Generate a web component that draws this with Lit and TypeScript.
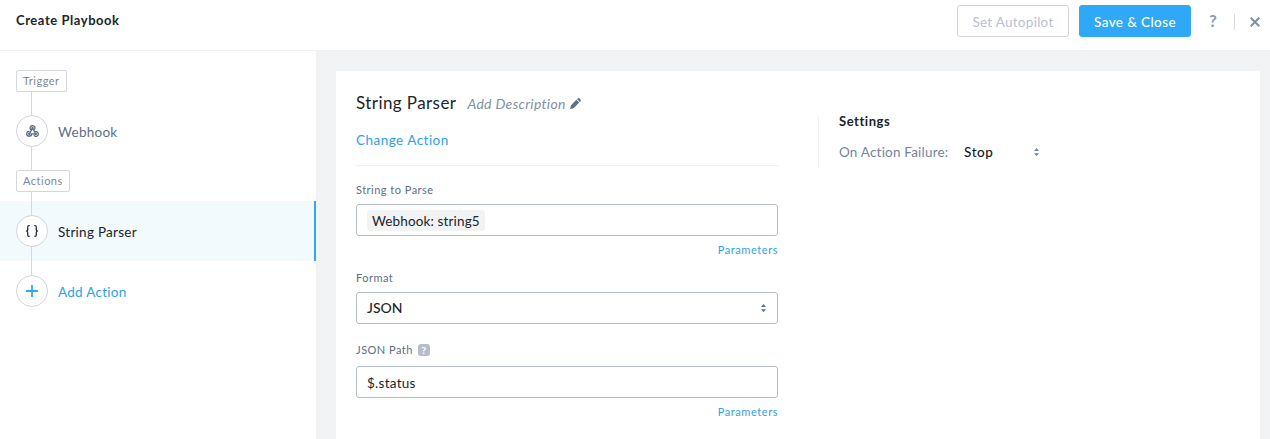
import { LitElement, html, css, svg } from "lit";
import { customElement } from "lit/decorators.js";

const sorter = svg`<path d="M0 3 L2.5 0 L5 3Z M0 5.2 H5 L2.5 8.2Z" fill="currentColor"/>`;

@customElement("app-root")
export class AppRoot extends LitElement {
  static styles = css`
    :host {
      display: flex;
      flex-direction: column;
      height: 439px;
      overflow: hidden;
      background: #fff;
      color: #20242b;
      font: 13.5px/20px Lato, "Open Sans", sans-serif;
      letter-spacing: 0.27px;
      white-space: nowrap;
    }
    * { box-sizing: border-box; }
    svg { display: block; flex: none; }
    header {
      display: flex;
      align-items: flex-start;
      flex: none;
      height: 51px;
      padding: 5px 10px 0 16px;
      border-bottom: 1px solid #f1f2f5;
    }
    .title { font-size: 13px; font-weight: 700; letter-spacing: 0.55px; line-height: 31px; margin-right: auto; }
    .btn {
      height: 32px;
      width: 112px;
      border-radius: 3px;
      border: 1px solid #cfd4df;
      color: #b9c0cf;
      text-align: center;
      line-height: 32px;
    }
    .primary { margin-left: 10px; border-color: #2ea8f7; background: #2ea8f7; color: #fff; font-weight: 500; letter-spacing: 0.4px; }
    .help { margin-left: 18px; width: 10px; line-height: 32px; font-size: 17px; font-weight: 700; color: #8d9bad; }
    .rule { margin: 9px 0 0 15px; width: 1px; height: 16px; background: #d5d9e1; }
    .close { margin: 12px 0 0 15px; color: #8290a3; }
    .body { display: flex; flex: 1; min-height: 0; }
    aside { width: 316px; background: #fff; padding-top: 19px; }
    .tag {
      display: inline-block;
      vertical-align: top;
      height: 22px;
      margin-left: 16px;
      padding: 0 6px;
      border: 1px solid #d2d7e0;
      border-radius: 2px;
      background: #fff;
      color: #7b899c;
      font-size: 11px;
      line-height: 20px;
      letter-spacing: 0.5px;
    }
    .stem { width: 1px; height: 9px; margin-left: 31px; background: #d2d7e0; }
    .step {
      display: flex;
      align-items: center;
      height: 60px;
      padding-left: 16px;
      color: #5d6e84;
      background: linear-gradient(#d2d7e0, #d2d7e0) 31px 0 / 1px 100% no-repeat;
    }
    .step.active {
      color: #20242b;
      border-right: 2px solid #2ea8f7;
      background-color: #f2fafe;
    }
    .step.add { color: #2ea1ee; background-size: 1px 30px; }
    .dot {
      display: flex;
      align-items: center;
      justify-content: center;
      width: 32px;
      height: 32px;
      margin-right: 10px;
      border: 1px solid #d2d5dd;
      border-radius: 50%;
      background: #fff;
    }
    .label { padding-top: 2px; }
    main { flex: 1; padding: 20px 10px 0 20px; background: #f2f3f5; }
    .card { display: flex; height: 100%; padding-left: 20px; background: #fff; }
    .form { width: 422px; padding-top: 22px; }
    .head { display: flex; align-items: baseline; height: 36px; }
    .name { font-size: 17px; letter-spacing: 0.42px; }
    .desc { margin-left: 11px; font-size: 14px; font-style: italic; color: #8190a3; letter-spacing: 0.32px; }
    .pencil { margin-left: 4px; color: #5f6f84; }
    .link { color: #2ea1ee; }
    .change { height: 37px; border-bottom: 1px solid #eff1f4; line-height: 22px; letter-spacing: 0.48px; }
    .field-label {
      display: flex;
      align-items: center;
      height: 18px;
      margin: 10px 0 5px;
      color: #5d6e84;
      font-size: 11px;
      letter-spacing: 0.48px;
    }
    .field-label.first { margin-top: 15px; }
    .field-label.last { margin: 17px 0 7px; }
    .box {
      display: flex;
      align-items: center;
      height: 32px;
      padding: 2px 10px 0;
      border: 1px solid #b5bccb;
      border-radius: 3px;
    }
    .box.select { padding-top: 0; font-weight: 500; font-size: 14px; letter-spacing: 0; }
    .chip { height: 21px; padding: 0 5px; border-radius: 4px; background: #f2f3f5; line-height: 22px; margin-top: -1px; letter-spacing: 0.13px; }
    .params { height: 18px; margin-top: 5px; text-align: right; font-size: 11px; line-height: 18px; letter-spacing: 0.56px; }
    .arrows { margin: 0 1px 0 auto; color: #5f6f84; }
    .side { color: #75849a; }
    .hint { display: flex; justify-content: center; width: 12px; height: 12px; margin-left: 5px; border-radius: 3px; background: #b5bccb; color: #fff; font-size: 10px; line-height: 12px; font-weight: 900; letter-spacing: 0; }
    .settings { height: 52px; margin: 45px 0 0 40px; padding-left: 20px; border-left: 1px solid #eff1f4; }
    .settings h2 { margin: -5px 0 11px; font-size: 13px; font-weight: 700; line-height: 20px; letter-spacing: 0.55px; }
    .row { display: flex; align-items: center; height: 20px; }
    .row .k { width: 125px; color: #75849a; letter-spacing: 0.2px; }
    .row .v { width: 70px; color: #16191f; font-weight: 500; letter-spacing: 0.6px; }
  `;

  step(icon: unknown, label: string, kind = "") {
    return html`<div class="step ${kind}"><span class="dot">${icon}</span><span class="label">${label}</span></div>`;
  }

  arrows(cls: string) {
    return html`<svg class=${cls} width="5" height="8.2" viewBox="0 0 5 8.2">${sorter}</svg>`;
  }

  render() {
    const webhook = html`<svg width="13" height="12" viewBox="0 0 14 13" fill="none" stroke="#5a6a80" stroke-width="1.35" stroke-linecap="round">
      <path d="M5 5A2.6 2.6 0 1 1 9.3 4.5M7 3.4 4.2 8.7M7 3.4 9.6 8M3.2 6.9A2.6 2.6 0 1 0 6 9.6H10.8M9.3 7.7A2.5 2.5 0 1 1 8.7 11.3"/>
      <circle cx="7" cy="3.2" r=".6"/><circle cx="3.5" cy="9.5" r=".6"/><circle cx="10.6" cy="9.6" r=".6"/></svg>`;
    const braces = html`<svg width="14" height="12" viewBox="0 0 14 12" fill="none" stroke="#292f38" stroke-width="1.3">
      <path d="M4.7.7H4Q2.7.7 2.7 2V4.4Q2.7 6 1.2 6Q2.7 6 2.7 7.6V10Q2.7 11.3 4 11.3H4.7M9.3.7H10Q11.3.7 11.3 2V4.4Q11.3 6 12.8 6Q11.3 6 11.3 7.6V10Q11.3 11.3 10 11.3H9.3"/></svg>`;
    const plus = html`<svg width="12" height="12" viewBox="0 0 12 12" stroke="#2ea8f7" stroke-width="1.8"><path d="M6 0V12M0 6H12"/></svg>`;
    return html`
      <header>
        <span class="title">Create Playbook</span>
        <span class="btn">Set Autopilot</span>
        <span class="btn primary">Save &amp; Close</span>
        <span class="help">?</span>
        <span class="rule"></span>
        <svg class="close" width="10" height="10" viewBox="0 0 10 10" stroke="currentColor" stroke-width="2"><path d="M.7.7 9.3 9.3M9.3.7.7 9.3"/></svg>
      </header>
      <div class="body">
        <aside>
          <div class="tag">Trigger</div>
          <div class="stem"></div>
          ${this.step(webhook, "Webhook")}
          <div class="stem"></div>
          <div class="tag">Actions</div>
          <div class="stem"></div>
          ${this.step(braces, "String Parser", "active")}
          ${this.step(plus, "Add Action", "add")}
        </aside>
        <main>
          <div class="card">
            <section class="form">
              <div class="head">
                <span class="name">String Parser</span>
                <span class="desc">Add Description</span>
                <svg class="pencil" width="11" height="11" viewBox="0 0 11 11" fill="currentColor"><path d="M.1 10.9.9 7.5 6.3 1.7 9.2 4.6 3.6 10.2ZM6.9 1.1 7.8.4Q8.7-.3 9.5.5L10.5 1.5Q11.3 2.3 10.5 3.2L9.8 4Z"/></svg>
              </div>
              <div class="change link">Change Action</div>
              <div class="field-label first">String to Parse</div>
              <div class="box"><span class="chip">Webhook: string5</span></div>
              <div class="params link">Parameters</div>
              <div class="field-label">Format</div>
              <div class="box select"><span>JSON</span>${this.arrows("arrows")}</div>
              <div class="field-label last">JSON Path<span class="hint">?</span></div>
              <div class="box"><span>$.status</span></div>
              <div class="params link">Parameters</div>
            </section>
            <section class="settings">
              <h2>Settings</h2>
              <div class="row"><span class="k">On Action Failure:</span><span class="v">Stop</span>${this.arrows("side")}</div>
            </section>
          </div>
        </main>
      </div>`;
  }
}
